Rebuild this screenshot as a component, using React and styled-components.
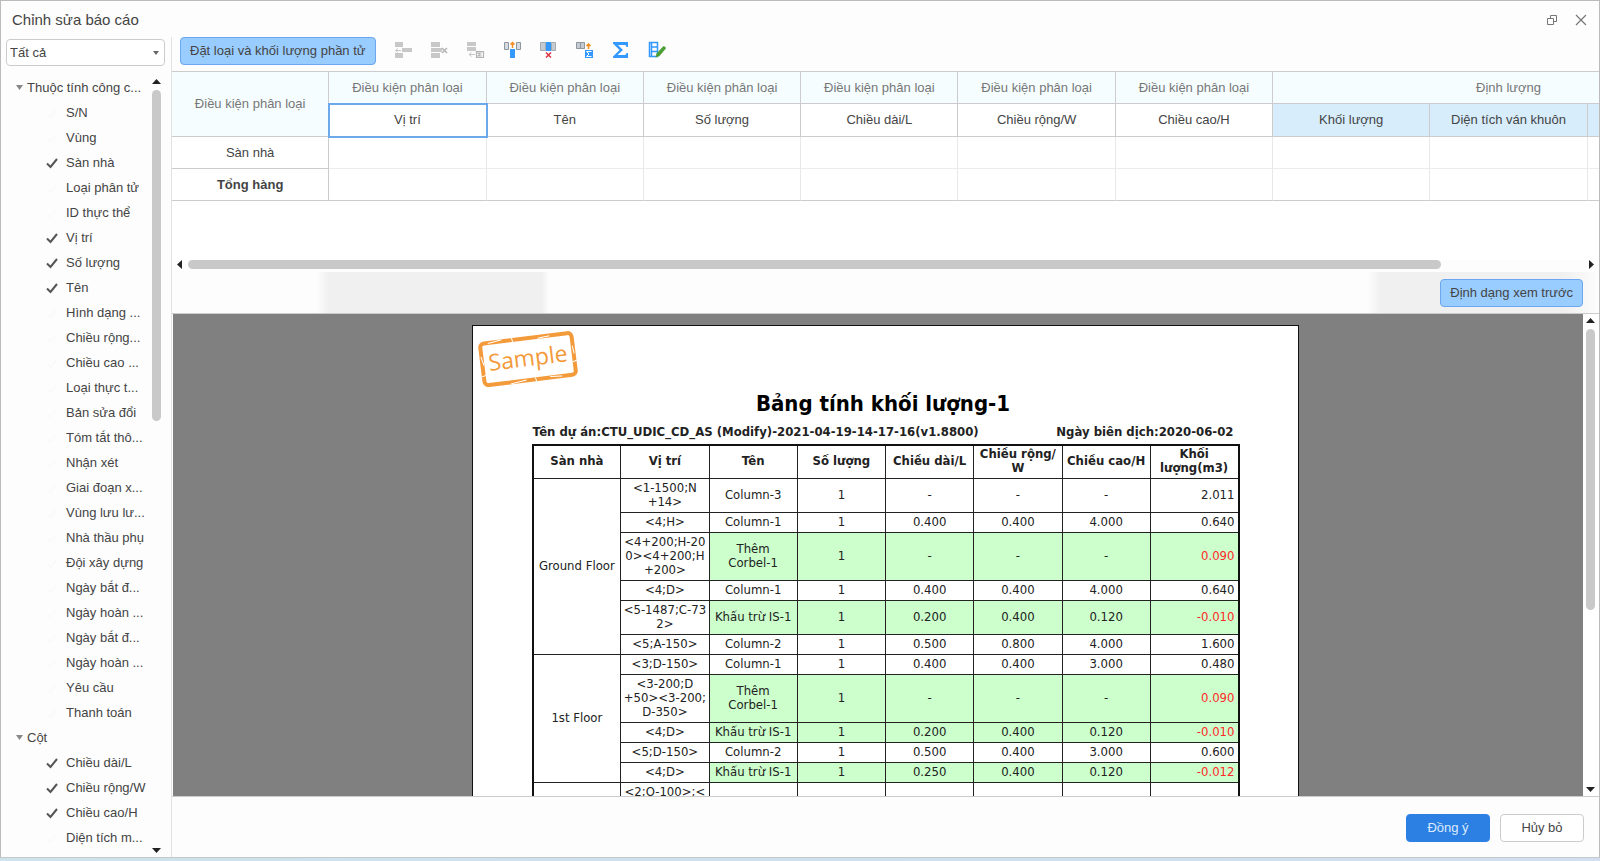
import React from 'react';
import styled, { createGlobalStyle } from 'styled-components';

const TREE = [
    {
        title: 'Thuộc tính công c...',
        items: [
            ['S/N', false],
            ['Vùng', false],
            ['Sàn nhà', true],
            ['Loại phân tử', false],
            ['ID thực thể', false],
            ['Vị trí', true],
            ['Số lượng', true],
            ['Tên', true],
            ['Hình dạng ...', false],
            ['Chiều rộng...', false],
            ['Chiều cao ...', false],
            ['Loại thực t...', false],
            ['Bản sửa đổi', false],
            ['Tóm tắt thô...', false],
            ['Nhận xét', false],
            ['Giai đoạn x...', false],
            ['Vùng lưu lư...', false],
            ['Nhà thầu phụ', false],
            ['Đội xây dựng', false],
            ['Ngày bắt đ...', false],
            ['Ngày hoàn ...', false],
            ['Ngày bắt đ...', false],
            ['Ngày hoàn ...', false],
            ['Yêu cầu', false],
            ['Thanh toán', false],
        ],
    },
    {
        title: 'Cột',
        items: [
            ['Chiều dài/L', true],
            ['Chiều rộng/W', true],
            ['Chiều cao/H', true],
            ['Diện tích m...', false],
        ],
    },
];

const CONDITIONS = ['Vị trí', 'Tên', 'Số lượng', 'Chiều dài/L', 'Chiều rộng/W', 'Chiều cao/H'];
const QUANTITIES = ['Khối lượng', 'Diện tích ván khuôn', ''];

const REPORT_HEAD = ['Sàn nhà', 'Vị trí', 'Tên', 'Số lượng', 'Chiều dài/L', 'Chiều rộng/\nW', 'Chiều cao/H', 'Khối\nlượng(m3)'];

const FLOORS = [
    {
        name: 'Ground Floor',
        rows: [
            { cells: ['<1-1500;N\n+14>', 'Column-3', '1', '-', '-', '-'], volume: '2.011' },
            { cells: ['<4;H>', 'Column-1', '1', '0.400', '0.400', '4.000'], volume: '0.640' },
            { cells: ['<4+200;H-20\n0><4+200;H\n+200>', 'Thêm\nCorbel-1', '1', '-', '-', '-'], volume: '0.090', adjust: true },
            { cells: ['<4;D>', 'Column-1', '1', '0.400', '0.400', '4.000'], volume: '0.640' },
            { cells: ['<5-1487;C-73\n2>', 'Khấu trừ IS-1', '1', '0.200', '0.400', '0.120'], volume: '-0.010', adjust: true },
            { cells: ['<5;A-150>', 'Column-2', '1', '0.500', '0.800', '4.000'], volume: '1.600' },
        ],
    },
    {
        name: '1st Floor',
        rows: [
            { cells: ['<3;D-150>', 'Column-1', '1', '0.400', '0.400', '3.000'], volume: '0.480' },
            { cells: ['<3-200;D\n+50><3-200;\nD-350>', 'Thêm\nCorbel-1', '1', '-', '-', '-'], volume: '0.090', adjust: true },
            { cells: ['<4;D>', 'Khấu trừ IS-1', '1', '0.200', '0.400', '0.120'], volume: '-0.010', adjust: true },
            { cells: ['<5;D-150>', 'Column-2', '1', '0.500', '0.400', '3.000'], volume: '0.600' },
            { cells: ['<4;D>', 'Khấu trừ IS-1', '1', '0.250', '0.400', '0.120'], volume: '-0.012', adjust: true },
        ],
    },
    {
        name: '',
        rows: [{ cells: ['<2;O-100>;<\n3;O-100>', '', '', '', '', ''], volume: '' }],
    },
];

const GREY = '#c8c8c8';
const BLUE = '#3399ff';

const TOOLS = [
    {
        label: 'Chèn hàng',
        disabled: true,
        icon: (
            <>
                <path fill={GREY} d="M2 2h8v5H2zM2 13h8v5H2zM9 8h10v4H9z" />
                <path stroke={GREY} d="M2.500 10.500H8M5 8.500L2.500 10.500L5 12.500" />
            </>
        ),
    },
    {
        label: 'Xóa hàng',
        disabled: true,
        icon: (
            <>
                <path fill={GREY} d="M2 2h9v5H2zM2 8h11v4H2zM2 13h9v5H2z" />
                <path stroke="#b4b4b4" strokeWidth="1.500" d="M13 8l5 5M18 8l-5 5" />
            </>
        ),
    },
    {
        label: 'Tổng hàng',
        disabled: true,
        icon: (
            <>
                <path fill={GREY} d="M2 2h9v4H2zM2 7h9v4H2z" />
                <path stroke={GREY} d="M4 14.500h6M6.500 12.500L4 14.500L6.500 16.500" />
                <path stroke="#b4b4b4" strokeWidth="1.200" d="M11.500 11.500h7v6h-7zM17 13h-4l2 1.500l-2 1.500h4" />
            </>
        ),
    },
    {
        label: 'Chèn cột',
        icon: (
            <>
                <path fill="#d5dbe0" stroke="#8d979f" d="M2.500 2.500h4v7h-4zM14.500 2.500h4v7h-4z" />
                <path fill={BLUE} d="M8 9h5v9H8z" />
                <path stroke="#f58a1f" strokeWidth="1.500" d="M10.500 8V2.500M8.500 4.500L10.500 2.500L12.500 4.500" />
            </>
        ),
    },
    {
        label: 'Xóa cột',
        icon: (
            <>
                <path fill="#c5cbd0" stroke="#a3acb3" d="M2.500 2.500h5v8h-5zM13.500 2.500h4v8h-4z" />
                <path fill={BLUE} d="M8 2h5v9H8z" />
                <path stroke="#dc3545" strokeWidth="1.500" d="M8 12.500l5 5M13 12.500l-5 5" />
            </>
        ),
    },
    {
        label: 'Tổng cột',
        icon: (
            <>
                <path fill="#c5cbd0" stroke="#8d979f" d="M1.500 2.500h4v6h-4zM5.500 2.500h4v6h-4z" />
                <path stroke="#f58a1f" strokeWidth="1.500" d="M13.500 9V4M11.500 6L13.500 4L15.500 6" />
                <path fill={BLUE} d="M10 10h8v8h-8z" />
                <path stroke="#fff" d="M16.500 11.500h-5l2.500 2.500l-2.500 2.500h5" />
            </>
        ),
    },
    {
        label: 'Tính tổng',
        icon: <path fill={BLUE} d="M2 2h15v5h-1.500c-.300-1.500-.800-2-2.300-2H7l5 5l-5.500 5H13c1.500 0 2.200-.500 2.500-2H17v5H2v-1.500l6.500-6.500L2 3.500z" />,
    },
    {
        label: 'Chỉnh sửa',
        icon: (
            <>
                <path stroke={BLUE} strokeWidth="1.500" d="M2.500 2.500h8v14h-8zM4.500 7h6M4.500 11.500h6M4.500 2.500v14" />
                <path fill="#4d9e35" d="M8.500 17.500l1-4l6.500-7c1-1 3.500 1 2.700 2.200l-6.200 7.300z" />
            </>
        ),
    },
];

function ToolIcon({ children }) {
    return (
        <svg width="20" height="20" viewBox="0 0 20 20" fill="none">
            {children}
        </svg>
    )
}

function Arrow({ dir }) {
    const turn = { up: 0, right: 90, down: 180, left: 270 }[dir];
    return (
        <svg width="9" height="9" viewBox="0 0 9 9">
            <path fill="#222" d="M0 7L4.500 2L9 7z" transform={`rotate(${turn} 4.500 4.500)`} />
        </svg>
    )
}

function ScrollBar({ horizontal, before, size, label }) {
    return (
        <ScrollTrack $horizontal={horizontal}>
            <ScrollButton aria-label={`${label}: lùi`}><Arrow dir={horizontal ? 'left' : 'up'} /></ScrollButton>
            <ScrollLane $horizontal={horizontal}>
                <Thumb $size={size} />
                <Rest $size={before} />
            </ScrollLane>
            <ScrollButton aria-label={`${label}: tiến`}><Arrow dir={horizontal ? 'right' : 'down'} /></ScrollButton>
        </ScrollTrack>
    )
}

function TreeItem({ name, defaultChecked }) {
    const [checked, setChecked] = React.useState(defaultChecked);
    return (
        <li>
            <ItemLabel>
                <HiddenCheck type="checkbox" checked={checked} onChange={() => setChecked(!checked)} />
                <CheckMark viewBox="0 0 12 12" $checked={checked}>
                    <path d="M1 6.500L4.500 10L11 2" fill="none" stroke="currentColor" strokeWidth="2" />
                </CheckMark>
                {name}
            </ItemLabel>
        </li>
    )
}

function TreeGroup({ title, items }) {
    const [open, setOpen] = React.useState(true);
    return (
        <li>
            <GroupButton aria-expanded={open} onClick={() => setOpen(!open)}>
                <svg width="7" height="5" viewBox="0 0 7 5"><path fill="#888" d="M0 0h7L3.500 5z" /></svg>
                {title}
            </GroupButton>
            {open && (
                <TreeList>
                    {items.map(([name, checked], i) => <TreeItem key={i} name={name} defaultChecked={checked} />)}
                </TreeList>
            )}
        </li>
    )
}

function ConditionGrid() {
    const blanks = CONDITIONS.concat(QUANTITIES);
    return (
        <Grid>
            <thead>
                <tr>
                    <GroupHead rowSpan={2}>Điều kiện phân loại</GroupHead>
                    {CONDITIONS.map(name => <GroupHead key={name}>Điều kiện phân loại</GroupHead>)}
                    <GroupHead colSpan={3}>Định lượng</GroupHead>
                </tr>
                <tr>
                    {CONDITIONS.map((name, i) => <FieldHead key={name} $selected={i === 0}>{name}</FieldHead>)}
                    {QUANTITIES.map((name, i) => <FieldHead key={i} $quantity>{name}</FieldHead>)}
                </tr>
            </thead>
            <tbody>
                <tr>
                    <RowHead scope="row">Sàn nhà</RowHead>
                    {blanks.map((_, i) => <GridCell key={i} />)}
                </tr>
                <tr>
                    <RowHead scope="row" $bold>Tổng hàng</RowHead>
                    {blanks.map((_, i) => <GridCell key={i} $last />)}
                </tr>
            </tbody>
        </Grid>
    )
}

function Stamp() {
    return (
        <StampMark width="102" height="56" viewBox="0 0 102 56" role="img" aria-label="Sample">
            <g transform="rotate(-7 51 28)">
                <rect x="4" y="7" width="92" height="42" rx="4" fill="none" stroke="#f39a3b" strokeWidth="4" />
                <path stroke="#fff" d="M12 7.500l14-2M62 8.500l12-1M30 50.500l16-2M70 48l12 1M3.500 20l2 9M95.500 20l1 8M2 40l5-1M94 36l5-1M36 5l1 4M55 47l1 4" />
                <text x="50" y="35" textAnchor="middle" fontFamily="'Open Sans', 'Noto Sans', sans-serif" fontSize="23" fill="#f39a3b">Sample</text>
            </g>
        </StampMark>
    )
}

function Report() {
    return (
        <Paper>
            <Stamp />
            <ReportTitle>Bảng tính khối lượng-1</ReportTitle>
            <ReportInfo>
                <span>Tên dự án:CTU_UDIC_CD_AS (Modify)-2021-04-19-14-17-16(v1.8800)</span>
                <span>Ngày biên dịch:2020-06-02</span>
            </ReportInfo>
            <ReportTable>
                <thead>
                    <tr>{REPORT_HEAD.map(name => <th key={name}>{name}</th>)}</tr>
                </thead>
                <tbody>
                    {FLOORS.map(floor => floor.rows.map((row, i) => (
                        <tr key={floor.name + i}>
                            {i === 0 && <td rowSpan={floor.rows.length}>{floor.name}</td>}
                            {row.cells.map((cell, c) => <ReportCell key={c} $adjust={row.adjust && c > 0}>{cell}</ReportCell>)}
                            <VolumeCell $adjust={row.adjust}>{row.volume}</VolumeCell>
                        </tr>
                    )))}
                </tbody>
            </ReportTable>
        </Paper>
    )
}

export default function App() {
    return (
        <>
            <GlobalStyle />
            <Screen>
                <Dialog>
                    <TitleBar>
                        <DialogTitle>Chỉnh sửa báo cáo</DialogTitle>
                        <WindowButton aria-label="Khôi phục">
                            <svg width="12" height="12" viewBox="0 0 12 12" fill="none" stroke="#777">
                                <path d="M1.500 4.500h6v6h-6zM4.500 4.500v-3h6v6h-3" />
                            </svg>
                        </WindowButton>
                        <WindowButton aria-label="Đóng">
                            <svg width="12" height="12" viewBox="0 0 12 12" fill="none" stroke="#777" strokeWidth="1.200">
                                <path d="M1 1l10 10M11 1L1 11" />
                            </svg>
                        </WindowButton>
                    </TitleBar>
                    <Body>
                        <Sidebar>
                            <FilterBox>
                                <Filter aria-label="Bộ lọc">
                                    <option>Tất cả</option>
                                </Filter>
                                <FilterArrow viewBox="0 0 6 4"><path fill="#666" d="M0 0h6L3 4z" /></FilterArrow>
                            </FilterBox>
                            <TreePane>
                                <Tree>
                                    {TREE.map(group => <TreeGroup key={group.title} {...group} />)}
                                </Tree>
                                <ScrollBar label="Danh sách" size={332} before={422} />
                            </TreePane>
                        </Sidebar>
                        <Main>
                            <Toolbar>
                                <LightButton>Đặt loại và khối lượng phần tử</LightButton>
                                <Tools>
                                    {TOOLS.map(tool => (
                                        <ToolButton key={tool.label} aria-label={tool.label} disabled={tool.disabled}>
                                            <ToolIcon>{tool.icon}</ToolIcon>
                                        </ToolButton>
                                    ))}
                                </Tools>
                            </Toolbar>
                            <GridPane>
                                <ConditionGrid />
                            </GridPane>
                            <ScrollBar horizontal label="Bảng" size={1257} before={143} />
                            <PreviewBar>
                                <LightButton>Định dạng xem trước</LightButton>
                            </PreviewBar>
                            <Preview>
                                <Canvas>
                                    <Report />
                                </Canvas>
                                <ScrollBar label="Xem trước" size={282} before={171} />
                            </Preview>
                            <Footer>
                                <PrimaryButton>Đồng ý</PrimaryButton>
                                <PlainButton>Hủy bỏ</PlainButton>
                            </Footer>
                        </Main>
                    </Body>
                </Dialog>
            </Screen>
        </>
    )
}

const GlobalStyle = createGlobalStyle`
    * {
        box-sizing: border-box;
    }
    body {
        margin: 0;
        color: #444;
        font: 13px/16px "Liberation Sans", Arial, sans-serif;
    }
    button, select {
        color: inherit;
        font: inherit;
    }
`
const Screen = styled.div`
    height: 100vh;
    padding-bottom: 3px;
    background: linear-gradient(90deg, #cfe3ec, #d2dff0);
`
const Dialog = styled.div`
    height: 100%;
    display: flex;
    flex-direction: column;
    background: #fdfdfd;
    border: 1px solid #bbb;
    border-bottom-color: #c4cacc;
`
const TitleBar = styled.header`
    height: 36px;
    padding: 2px 12px 0 11px;
    display: flex;
    align-items: center;
    gap: 16px;
    flex-shrink: 0;
`
const DialogTitle = styled.h1`
    margin: 0;
    flex: 1;
    font-size: 15px;
    line-height: 20px;
    font-weight: normal;
`
const WindowButton = styled.button`
    width: 13px;
    height: 20px;
    padding: 0;
    display: flex;
    align-items: center;
    justify-content: center;
    border: none;
    background: none;
    cursor: pointer;
`
const Body = styled.div`
    display: flex;
    flex: 1;
    min-height: 0;
`
const Sidebar = styled.aside`
    width: 171px;
    flex-shrink: 0;
    display: flex;
    flex-direction: column;
    border-right: 1px solid #e2e2e2;
`
const FilterBox = styled.div`
    position: relative;
    margin: 2px 6px 9px 5px;
`
const Filter = styled.select`
    width: 100%;
    height: 27px;
    padding: 0 3px;
    appearance: none;
    background: white;
    border: 1px solid #ccc;
    border-radius: 4px;
`
const FilterArrow = styled.svg`
    position: absolute;
    right: 6px;
    top: 12px;
    width: 6px;
    height: 4px;
    pointer-events: none;
`
const TreePane = styled.div`
    flex: 1;
    min-height: 0;
    display: flex;
    padding-right: 10px;
`
const TreeList = styled.ul`
    margin: 0;
    padding: 0;
    list-style: none;
`
const Tree = styled(TreeList)`
    flex: 1;
    overflow: hidden;
    white-space: nowrap;
`
const GroupButton = styled.button`
    width: 100%;
    height: 25px;
    padding: 0 0 0 15px;
    display: flex;
    align-items: center;
    gap: 4px;
    border: none;
    background: none;
    text-align: left;
    cursor: pointer;
`
const ItemLabel = styled.label`
    height: 25px;
    padding-left: 45px;
    display: flex;
    align-items: center;
    cursor: pointer;
`
const HiddenCheck = styled.input`
    width: 1px;
    height: 1px;
    margin: 0 -1px 0 0;
    opacity: 0;
`
const CheckMark = styled.svg`
    width: 12px;
    height: 12px;
    margin-right: 8px;
    flex-shrink: 0;
    color: ${props => props.$checked ? '#555' : '#fafafa'};
`
const ScrollTrack = styled.div`
    display: flex;
    flex-direction: ${props => props.$horizontal ? 'row' : 'column'};
    align-items: center;
    flex-shrink: 0;
    gap: 4px;
    padding: ${props => props.$horizontal ? '0 3px' : '2px 0'};
`
const ScrollButton = styled.button`
    width: 9px;
    height: 9px;
    padding: 0;
    display: flex;
    border: none;
    background: none;
    flex-shrink: 0;
`
const ScrollLane = styled.div`
    flex: 1;
    min-width: 9px;
    min-height: 9px;
    display: flex;
    flex-direction: ${props => props.$horizontal ? 'row' : 'column'};
`
const Thumb = styled.div`
    flex: ${props => props.$size} 1 0;
    min-width: 9px;
    min-height: 9px;
    border-radius: 5px;
    background: #c9c9c9;
`
const Rest = styled.div`
    flex: ${props => props.$size} 1 0;
`
const Main = styled.main`
    flex: 1;
    min-width: 0;
    display: flex;
    flex-direction: column;
`
const Toolbar = styled.div`
    height: 34px;
    padding: 0 8px;
    display: flex;
    align-items: flex-start;
    gap: 17px;
    flex-shrink: 0;
`
const LightButton = styled.button`
    height: 28px;
    padding: 0 9px;
    border: 1px solid #6aa7ee;
    border-radius: 4px;
    background: #99ccff;
    white-space: nowrap;
    cursor: pointer;
`
const Tools = styled.div`
    width: 275px;
    height: 26px;
    display: flex;
    align-items: center;
    justify-content: space-between;
`
const ToolButton = styled.button`
    width: 20px;
    height: 20px;
    padding: 0;
    display: flex;
    border: none;
    background: none;
    cursor: pointer;
`
const GridPane = styled.div`
    height: 189px;
    overflow: hidden;
    flex-shrink: 0;
    background: white;
    border-top: 1px solid #ccc;
`
const Grid = styled.table`
    width: 1573px;
    table-layout: fixed;
    border-collapse: separate;
    border-spacing: 0;
    text-align: center;
    th, td {
        height: 32px;
        padding: 0;
        font-weight: normal;
    }
    thead tr + tr > * {
        height: 33px;
    }
`
const GroupHead = styled.th`
    color: #777;
    background: #f5fdff;
    border: solid #ccc;
    border-width: 0 1px 1px 0;
`
const FieldHead = styled.th`
    background: ${props => props.$quantity ? '#d7edfc' : 'white'};
    border: solid #ccc;
    border-width: 0 1px 1px 0;
    ${props => props.$selected && 'outline: 2px solid #6ca8ea; outline-offset: -1px;'}
`
const RowHead = styled.th`
    border: solid #ccc;
    border-width: 0 1px 1px 0;
    && {
        font-weight: ${props => props.$bold ? 'bold' : 'normal'};
    }
`
const GridCell = styled.td`
    border: solid #e8e8e8;
    border-width: 0 1px 1px 0;
    border-bottom-color: ${props => props.$last ? '#ccc' : '#ececec'};
`
const PreviewBar = styled.div`
    height: 45px;
    padding: 10px 16px 0;
    display: flex;
    align-items: flex-start;
    justify-content: flex-end;
    flex-shrink: 0;
    border-bottom: 1px solid #ccc;
    background:
        linear-gradient(90deg, transparent 0, #f0f0f0 5%, #f0f0f0 97%, transparent 100%) 145px 3px / 232px 100% no-repeat,
        linear-gradient(90deg, transparent 0, #f0f0f0 6%, #f0f0f0 85%, transparent 100%) right 0 top 3px / 232px 100% no-repeat;
`
const Preview = styled.div`
    flex: 1;
    min-height: 0;
    display: flex;
    padding-right: 4px;
    background: white;
`
const Canvas = styled.div`
    flex: 1;
    min-width: 0;
    margin: 0 3px 0 1px;
    padding-top: 11px;
    display: flex;
    justify-content: center;
    align-items: flex-start;
    overflow: hidden;
    background: #808080;
`
const Paper = styled.article`
    position: relative;
    width: 827px;
    margin-left: 14px;
    flex-shrink: 0;
    padding: 64px 58px 0 59px;
    background: white;
    border: 1px solid #111;
    color: #222;
    font-family: "DejaVu Sans Condensed", "Noto Sans", sans-serif;
`
const StampMark = styled.svg`
    position: absolute;
    left: 5px;
    top: 5px;
`
const ReportTitle = styled.h2`
    margin: 0 0 5px;
    padding-right: 5px;
    color: black;
    font-size: 22px;
    line-height: 28px;
    text-align: center;
`
const ReportInfo = styled.div`
    padding: 0 6px 3px 1px;
    display: flex;
    justify-content: space-between;
    font-size: 13px;
    line-height: 18px;
    font-weight: bold;
    white-space: nowrap;
`
const ReportTable = styled.table`
    width: 100%;
    table-layout: fixed;
    border-collapse: collapse;
    border: 2px solid #111;
    font-size: 13px;
    line-height: 14px;
    text-align: center;
    white-space: pre;
    th, td {
        padding: 2px 0 3px;
        border: 1px solid #222;
    }
    th {
        padding: 1px 0 3px;
    }
`
const ReportCell = styled.td`
    background: ${props => props.$adjust ? '#ccffcc' : 'white'};
`
const VolumeCell = styled.td`
    background: ${props => props.$adjust ? '#ccffcc' : 'white'};
    color: ${props => props.$adjust ? '#ff2a2a' : 'inherit'};
    text-align: right;
    ${ReportTable} & {
        padding-right: 3px;
    }
`
const Footer = styled.footer`
    height: 61px;
    padding: 2px 15px 0 16px;
    display: flex;
    align-items: center;
    justify-content: flex-end;
    gap: 10px;
    flex-shrink: 0;
    border-top: 1px solid #ccc;
`
const PlainButton = styled.button`
    width: 84px;
    height: 28px;
    padding: 0;
    border: 1px solid #ccc;
    border-radius: 4px;
    background: white;
    cursor: pointer;
`
const PrimaryButton = styled(PlainButton)`
    border-color: #2d80e3;
    background: #2d80e3;
    color: #dcebfb;
`
